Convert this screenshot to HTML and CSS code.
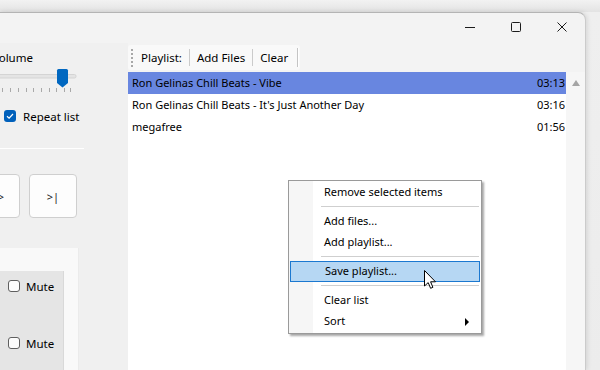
FILE: index.html
```html
<!DOCTYPE html>
<html lang="en">
<head>
    <meta charset="UTF-8">
    <title>Player - Playlist</title>
    <link rel="stylesheet" href="styles.css">
</head>
<body>
    <div class="screen">
        <div class="window">
            <div class="titlebar">
                <span class="cap-btn">
                    <svg width="10" height="10" viewBox="0 0 10 10"><path d="M0 5.5H10" stroke="#1b1b1b" stroke-width="1"/></svg>
                </span>
                <span class="cap-btn">
                    <svg width="10" height="10" viewBox="0 0 10 10"><rect x="0.5" y="0.5" width="9" height="9" rx="1" fill="none" stroke="#1b1b1b" stroke-width="1"/></svg>
                </span>
                <span class="cap-btn">
                    <svg width="10" height="10" viewBox="0 0 10 10"><path d="M0.5 0.5L9.5 9.5M9.5 0.5L0.5 9.5" stroke="#1b1b1b" stroke-width="1"/></svg>
                </span>
            </div>

            <div class="client">
                <aside class="controls">
                    <div class="volume-label">Volume</div>
                    <svg class="slider" width="80" height="27" viewBox="0 0 80 27">
                        <rect x="-2" y="7.5" width="78" height="3.5" rx="1.5" fill="#e4e4e4" stroke="#d4d4d4"/>
                        <g stroke="#a9a9a9" stroke-width="1">
                            <path d="M2.5 21V25M10.5 21V25M18.5 21V25M26.5 21V25M33.5 21V25M41.5 21V25M49.5 21V25M56.5 21V25M64.5 21V25M70.5 21V25"/>
                        </g>
                        <path d="M57 3.5Q57 2 58.5 2H66.5Q68 2 68 3.5V16L62.5 20.5L57 16Z" fill="#0067c0"/>
                    </svg>

                    <label class="check">
                        <span class="box checked">
                            <svg width="12" height="12" viewBox="0 0 12 12"><path d="M3 6.2L5.1 8.2L9 4" fill="none" stroke="#fff" stroke-width="1.2"/></svg>
                        </span>
                        Repeat list
                    </label>

                    <div class="rule"></div>

                    <div class="transport">
                        <button class="btn"><span class="btn-text cut">&gt;</span></button>
                        <button class="btn"><span class="btn-text">&gt;|</span></button>
                    </div>

                    <div class="mixer">
                        <div class="channels">
                            <label class="check"><span class="box"></span>Mute</label>
                            <label class="check"><span class="box"></span>Mute</label>
                        </div>
                    </div>
                </aside>

                <section class="playlist">
                    <div class="toolbar">
                        <span class="grip"></span>
                        <span class="tb-item">Playlist:</span>
                        <span class="tb-sep"></span>
                        <span class="tb-item">Add Files</span>
                        <span class="tb-sep"></span>
                        <span class="tb-item">Clear</span>
                        <span class="tb-end"></span>
                    </div>

                    <div class="list-area">
                        <ul class="tracks">
                            <li class="track selected"><span>Ron Gelinas Chill Beats - Vibe</span><span>03:13</span></li>
                            <li class="track"><span>Ron Gelinas Chill Beats - It's Just Another Day</span><span>03:16</span></li>
                            <li class="track"><span>megafree</span><span>01:56</span></li>
                        </ul>
                        <div class="scrollbar"><span class="arrow-up"></span></div>
                    </div>
                </section>
            </div>
        </div>

        <ul class="menu">
            <li class="menu-item">Remove selected items</li>
            <li class="menu-sep"></li>
            <li class="menu-item">Add files...</li>
            <li class="menu-item">Add playlist...</li>
            <li class="menu-sep"></li>
            <li class="menu-item hover">Save playlist...</li>
            <li class="menu-sep"></li>
            <li class="menu-item">Clear list</li>
            <li class="menu-item sub">Sort</li>
        </ul>

        <svg class="cursor" width="13" height="20" viewBox="0 0 13 20">
            <path d="M0.5 0.5V16L4.2 12.6L6.6 18.3L8.9 17.3L6.6 11.8H11.5Z" fill="#fff" stroke="#000" stroke-width="1" stroke-linejoin="round"/>
        </svg>
    </div>
</body>
</html>
```

FILE: styles.css
```css
* {
    margin: 0;
    padding: 0;
    box-sizing: border-box;
}

body {
    font-family: 'Noto Sans', 'Open Sans', sans-serif;
    font-size: 11px;
    color: #000;
    background: #eeeeee;
}

.screen {
    position: relative;
    width: 600px;
    height: 370px;
    overflow: hidden;
    padding-top: 12px;
    background: linear-gradient(#f2f2f2, #e3e3e3 12px, #efefef 12px, #ececec);
}

/* window frame */
.window {
    width: 586px;
    height: 358px;
    display: flex;
    flex-direction: column;
    border-top: 1px solid #b4b4b4;
    border-right: 1px solid #cbcbcb;
    border-top-right-radius: 8px;
    background: #f3f3f3;
    box-shadow: 1px 0 5px rgba(0, 0, 0, 0.12);
    overflow: hidden;
}

.titlebar {
    height: 30px;
    display: flex;
    justify-content: flex-end;
    flex-shrink: 0;
}

.cap-btn {
    width: 46px;
    height: 30px;
    display: flex;
    align-items: center;
    justify-content: center;
    padding-bottom: 3px;
}

.cap-btn svg {
    display: block;
}

.client {
    flex: 1;
    display: flex;
    min-height: 0;
}

/* left control column */
.controls {
    width: 128px;
    flex-shrink: 0;
    background: #f0f0f0;
    display: flex;
    flex-direction: column;
    overflow: hidden;
    padding-top: 7px;
    font-size: 11.5px;
}

.volume-label {
    line-height: 16px;
    margin-left: -8px;
    white-space: nowrap;
}

.slider {
    display: block;
    margin-top: 1px;
}

.check {
    display: flex;
    align-items: center;
    gap: 7px;
    height: 18px;
    white-space: nowrap;
}

.controls > .check {
    margin-top: 13px;
    padding-left: 4px;
}

.box {
    width: 12px;
    height: 12px;
    border: 1px solid #5f5f5f;
    border-radius: 3px;
    background: #fcfcfc;
    flex-shrink: 0;
}

.box.checked {
    border: none;
    background: #0060bb;
}

.box svg {
    display: block;
}

.rule {
    width: 84px;
    height: 1px;
    background: #ffffff;
    margin-top: 23px;
}

.transport {
    display: flex;
    gap: 9px;
    margin-top: 25px;
    margin-left: -28px;
}

.btn {
    width: 48px;
    height: 44px;
    border: 1px solid #cfcfcf;
    border-radius: 4px;
    background: #fdfdfd;
    font-family: inherit;
    font-size: 11px;
    color: #1a1a1a;
    display: flex;
    align-items: center;
    justify-content: center;
}

.btn-text.cut {
    margin-left: 10px;
}

.mixer {
    flex: 1;
    width: 79px;
    margin-top: 30px;
    padding-top: 23px;
    background: #f9f9f9;
    border-right: 1px solid #ebebeb;
}

.channels {
    width: 64px;
    height: 100%;
    background: #e5e5e5;
    border-right: 1px solid #d9d9d9;
    padding: 6px 0 0 8px;
    display: flex;
    flex-direction: column;
    gap: 39px;
}

.channels .check {
    gap: 6px;
}

/* playlist */
.playlist {
    flex: 1;
    display: flex;
    flex-direction: column;
    min-width: 0;
}

.toolbar {
    width: 172px;
    height: 25px;
    margin-top: 2px;
    background: #f9f9f9;
    border-radius: 3px;
    display: flex;
    align-items: center;
    padding-left: 3px;
}

.grip {
    width: 2px;
    height: 18px;
    background: repeating-linear-gradient(#a8a8a8 0 2px, transparent 2px 4px);
    margin-right: 1px;
}

.tb-item {
    padding: 0 7px 1px;
    line-height: 23px;
    white-space: nowrap;
    font-size: 11.5px;
}

.tb-sep {
    width: 1px;
    height: 17px;
    background: #cbcbcb;
}

.tb-end {
    width: 2px;
    height: 19px;
    margin-left: auto;
    margin-right: 1px;
    border-left: 1px solid #c4c4c4;
    border-right: 1px solid #ffffff;
}

.list-area {
    flex: 1;
    display: flex;
    margin-top: 2px;
    min-height: 0;
}

.tracks {
    flex: 1;
    list-style: none;
    background: #ffffff;
}

.track {
    display: flex;
    justify-content: space-between;
    height: 22px;
    line-height: 22px;
    padding: 0 1px 0 4px;
    white-space: nowrap;
}

.track.selected {
    background: #6886e0;
}

.scrollbar {
    width: 19px;
    background: #f6f6f6;
    display: flex;
    justify-content: center;
    padding-top: 8px;
}

.arrow-up {
    width: 0;
    height: 0;
    border-left: 4.5px solid transparent;
    border-right: 4.5px solid transparent;
    border-bottom: 6px solid #a5a5a5;
}

/* context menu */
.menu {
    position: absolute;
    left: 288px;
    top: 180px;
    width: 194px;
    list-style: none;
    padding: 1px 0;
    border: 1px solid #9a9a9a;
    background: linear-gradient(to right, #f6f6f6 24px, #ffffff 24px);
    box-shadow: 2px 2px 2px rgba(0, 0, 0, 0.35);
}

.menu-item {
    position: relative;
    height: 21px;
    line-height: 20px;
    padding-left: 35px;
    white-space: nowrap;
}

.menu-item.hover {
    margin: 0 1px;
    padding-left: 34px;
    line-height: 18px;
    background: #b6d7f3;
    border: 1px solid #1b78d0;
}

.menu-item.sub::after {
    content: "";
    position: absolute;
    right: 12px;
    top: 7px;
    border-left: 4px solid #000;
    border-top: 4px solid transparent;
    border-bottom: 4px solid transparent;
}

.menu-sep {
    height: 8px;
    margin: 0 2px 0 32px;
    background: linear-gradient(transparent 3px, #cfcfcf 3px, #cfcfcf 4px, transparent 4px);
}

.cursor {
    position: absolute;
    left: 424px;
    top: 270px;
}
```
